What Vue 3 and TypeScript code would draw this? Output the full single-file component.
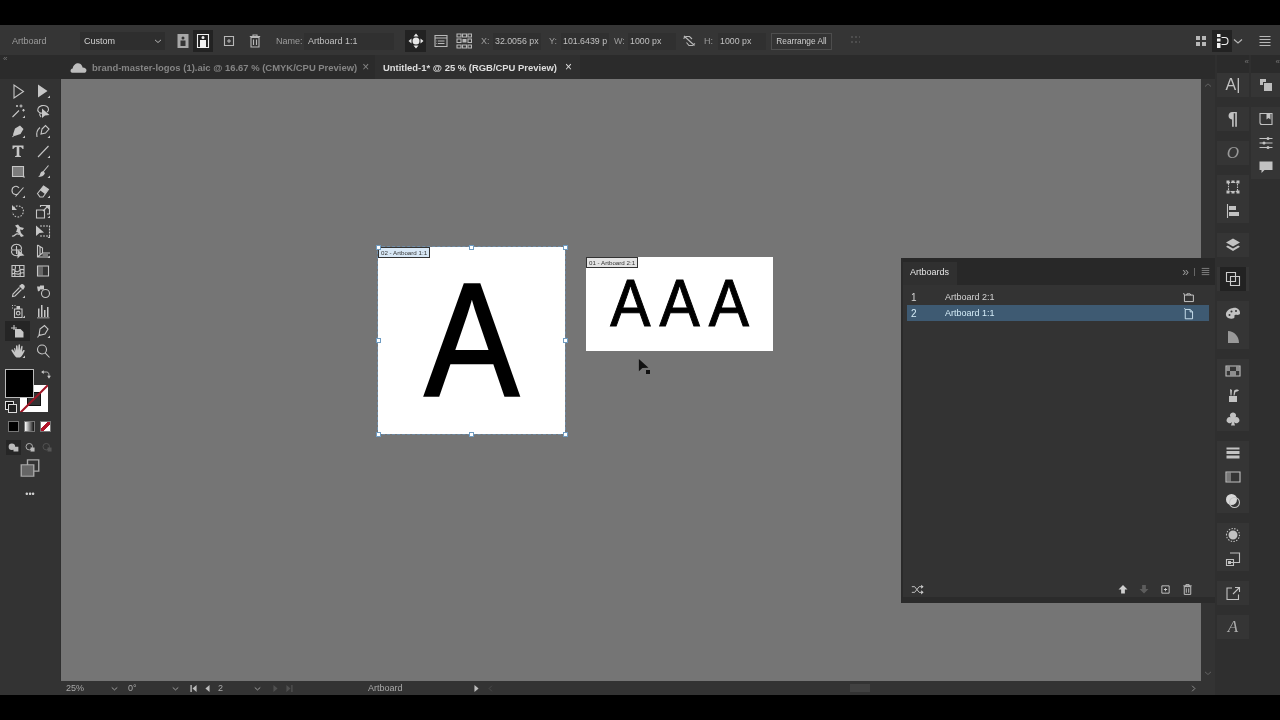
<script setup lang="ts">
import { h } from 'vue'

type Def = { s?: string; f?: string; d?: string; c?: string }

const corner = 'M15 15h-2.5l2.5-2.5z'
const circ = (x: number, y: number, r: number) => `M${x - r} ${y}A${r} ${r} 0 1 1 ${x + r} ${y}A${r} ${r} 0 1 1 ${x - r} ${y}Z`

const icons: Record<string, Def> = {
  select: { s: 'M4 2V15L13.5 8.5Z' },
  direct: { f: 'M3 1.5V14.5L12.5 8Z' + corner },
  wand: { s: 'M2.5 14L9 7.5M11 1.5v3M9.5 3h3M13.5 6v2.5M12.2 7.2h2.6M7 2v2M6 3h2', f: corner },
  lasso: { s: 'M10 10C4 11 2 8 3 5.5 4 2.5 9 1.5 12 3.5 14 5 14 8 12 9M5 10c-1 2 0 3 1 4', f: 'M7 5.5V15L10 12.5 14.5 12Z' },
  pen: { s: 'M2.5 14L5 11', f: 'M5 5.5L10 2.5 13.5 6 10.5 11 4.5 13 3 11.5Z' + corner },
  curve: { s: 'M2 14C1 9 3 6 5 4.5M7 6L10.5 2.5 14 6 10.5 10 6 11 7 6Z', f: corner },
  type: { f: 'M2.5 2.5H13.5V6H12.5C12 4.5 11 4 9.3 4V12.5L11 13.2V14H5V13.2L6.7 12.5V4C5 4 4 4.5 3.5 6H2.5Z' },
  line: { s: 'M3 14L13.5 3', f: corner },
  rect: { s: 'M2.5 3.5H13.5V13.5H2.5Z', f: 'M3 4H13V13H3Z' + corner, c: '#7c7c7c' },
  brush: { s: 'M8 9L13.5 2.5', f: 'M8.5 8.5L10 10C9 13 6 14 3 14 4.5 13 5 12 5.3 10.5 6 9 7.5 8 8.5 8.5Z' + corner },
  shaper: { s: 'M9 5C7 2 2 3 2 7.5S7 12 8 11M5.5 13.5L13.5 4.5', f: corner },
  eraser: { s: 'M2.5 10.5L8.5 3 13.5 6.5 8 14H5Z', f: 'M8.5 3L13.5 6.5 10 11 5 7.2Z' + corner },
  rotate: { s: 'M3.5 5C6 2 11 2 13 6 14.5 10 11.5 14 8 14 5 14 3 12 2.5 9', d: '1.6 1.4', f: 'M2 2V7H7Z' },
  scale: { s: 'M1.5 7H9.5V15H1.5ZM5.5 4V2.5H14.5V11H12M8 8L13 3', f: 'M10 2.5H14.5V7Z' + corner },
  warp: { s: 'M2 13C5 14 5 10 8 11S9 7 7 6', f: 'M5 2.5L8 1.5 10 4 14 5 12.5 7 10 6.5 11 10 14 13 11 14 8 9.5 6 9 7.5 5.5Z' },
  free: { s: 'M5 3H14.5V13H5', d: '2 1', f: 'M1 2.5V13L4.5 10 9 9.5Z' + corner },
  builder: { s: 'M2 7A5 4 0 1 1 11 7 5 4 0 1 1 2 7ZM2 7H11M6.5 3V11', f: 'M7.5 6.5V15.5L10 13 14.5 12.5Z' },
  persp: { s: 'M2.5 2V14H15M2.5 2L7.5 5V10L2.5 14M7.5 10H15M7.5 12H13M5 3.5V12', f: corner },
  mesh: { s: 'M2 2.5H14V13.5H2ZM2 7C5 5 5 10 8 8.5S11 5 14 7M2 11C5 9 6 12 9 11S12 9 14 10M5 2.5C7 5 3 8 5 13.5M10 2.5C8 5 12 8 10 13.5' },
  gradient: { s: 'M2.5 3H13.5V13H2.5Z', f: 'M3 3.5H5.5V12.5H3ZM5.5 3.5H8V12.5H5.5Z', c: '#666' },
  dropper: { s: 'M9.5 4.5L3 11 2.5 13.5 5 13 11.5 6.5', f: 'M9 3L11 1.5C12 .8 13 1 14 2S15 4 14.3 5L13 7Z' + corner },
  blend: { s: circ(10.5, 10.5, 4), f: 'M2 3.5H5V7.5L3 8.5ZM5 2.5H9V6.5H5Z' },
  spray: { s: 'M4.5 6H12V14.5H4.5Z' + circ(8.2, 10.2, 1.8) + 'M2 2.5h1M2 5h1M4.5 2.5h1', f: 'M6.5 3H10V6H6.5Z' + corner },
  chart: { f: 'M2 14.5H14.5V15.2H2ZM3 5.5H4.5V14H3ZM6 2H7.5V14H6ZM9 7H10.5V14H9ZM12 4H13.5V14H12Z' },
  artboard: { s: 'M1 5H7M4 2V7', f: 'M5 6H10.5L13.5 9V14.5H5Z' },
  slice: { s: 'M2.5 14.5L5 11M5 6L9.5 2.5 13 6 10 11 4 12.5Z', f: corner },
  hand: { f: 'M4 5.5C4 4.8 5 4.8 5.3 5.5L6 8 6 3C6 2 7.3 2 7.5 3L8 7.5 8.5 2C8.7 1 10 1.2 10 2.2V7.5L11.3 3.3C11.6 2.4 12.7 2.7 12.6 3.7L12 9 13.2 7.3C14 6.5 15 7.2 14.5 8.2 13 11 12 13.5 10 14.5H6.5C5 13.5 3 10 1.5 7.7 1 6.8 2 6 2.8 6.6L4.8 9.5Z' + corner },
  zoom: { s: circ(7, 6.5, 4.5) + 'M10.2 9.8L14.5 14.5' },
  portraitA: { f: 'M2.5 1H13.5V15H2.5ZM6.500 5A1.500 1.500 0 1 0 9.500 5 1.500 1.500 0 1 0 6.500 5ZM5.500 7.500V13H10.500V7.500Z', c: '#a8a8a8' },
  portraitB: { s: 'M2.500 1.500H13.500V14.500H2.500Z', f: 'M6.500 4.500A1.500 1.500 0 1 1 9.500 4.500 1.500 1.500 0 1 1 6.500 4.500ZM5 7H11V14H5Z' },
  plusbox: { s: 'M3.5 3.5H12.5V12.5H3.5Z', f: 'M7.5 6H8.5V7.5H10V8.5H8.5V10H7.5V8.5H6V7.5H7.5Z' },
  trash: { s: 'M4 4.5H12V14H4ZM2.8 3.5H13.2M6 3.5V2H10V3.5M6.5 6.5V12M9.5 6.5V12' },
  movearts: { f: 'M8 .5L10.5 3.5H5.5ZM8 15.5L5.5 12.5H10.5ZM.5 8L3.5 5.5V10.5ZM15.5 8L12.5 5.5V10.5Z' + circ(8, 8, 3.5), c: '#e8e8e8' },
  options: { s: 'M2 2.5H14V13.5H2ZM2 5H14M5 8H11.5M5 10.5H11.5', f: 'M3.5 7.5H4.2V8.5H3.5ZM3.5 10H4.2V11H3.5Z' },
  grid9: { s: 'M1 1H5V4H1ZM6.5 1H10.5V4H6.5ZM12 1H15.5V4H12ZM1 6H5V9.5H1ZM12 6H15.5V9.5H12ZM1 12H5V15H1ZM6.5 12H10.5V15H6.5ZM12 12H15.5V15H12Z', f: 'M6.5 6H10.5V9.5H6.5Z' },
  link: { s: 'M2.5 5.5L5 3.5H8.5L11 6M5.5 9.5L8 12.5H11.5L14 10.5M3 3L13.5 12.5' },
  align: { f: 'M2 3H4V5H2ZM6 3H8V5H6ZM2 8H4V10H2ZM6 8H8V10H6ZM10 3H11V5H10ZM10 8H11V10H10Z' },
  tiles: { f: 'M3 3H7V7H3ZM9 3H13V7H9ZM3 9H7V13H3ZM9 9H13V13H9Z' },
  magnet: { f: 'M3 1H6.5V4H3ZM3 5.5H6.5V8.5H3ZM3 10H6.5V15H3Z', s: 'M7.5 4.5H11C15 4.5 15 11.5 11 11.5H7.5' },
  list: { s: 'M2.5 3.5H13.5M2.5 6.5H13.5M2.5 9.5H13.5M2.5 12.5H13.5' },
  chev: { s: 'M4 6.5L8 10 12 6.5' },
  chevUp: { s: 'M4 10L8 6.5 12 10' },
  chevL: { s: 'M10 4L6 8 10 12' },
  chevR: { s: 'M6 4L10 8 6 12' },
  first: { f: 'M3.5 3H5.5V13H3.5ZM12.5 3V13L6.5 8Z' },
  prev: { f: 'M11 3V13L5 8Z' },
  next: { f: 'M5 3V13L11 8Z' },
  last: { f: 'M10.5 3H12.5V13H10.5ZM3.5 3V13L9.5 8Z' },
  cloud: { f: 'M2 13C0 13 0 9 2.5 9 3 5 7 3 9.5 4.5 11 5.5 11.5 6.5 11.8 8 14.5 8 15.5 9.500 15.500 10.500 15.500 12 14.500 13 13 13Z' },
  layers: { f: 'M8 1.5L15 5.5 8 9.5 1 5.5ZM2.8 8.5L8 11.5 13.2 8.500 15 9.7 8 14 1 9.7Z' },
  arrange: { s: 'M1.5 1.5H10.5V10.5H1.5ZM5.5 5.5H14.5V14.5H5.5Z' },
  stack: { f: 'M2 2H8V5H5V8H2ZM6 6H14V14H6Z', c: '#bdbdbd' },
  library: { s: 'M2 2.500H14V13.500H4C3 13.500 2 12.500 2 11.500Z', f: 'M8.500 2.500H12.500V8.500L10.500 7 8.500 8.500Z' },
  sliders: { s: 'M1.500 3.500H14.500M1.500 8H14.500M1.500 12.500H14.500', f: circ(10, 3.5, 1.5) + circ(6, 8, 1.5) + circ(10, 12.5, 1.5) },
  bubble: { f: 'M1.500 2.500H14.500V11H6.500L3.500 14V11H1.500Z' },
  palette: { f: 'M8 3C12 2 15.5 5 15 8.5 14.7 10 13 10 11 9.8 9 9.7 9.5 11 9.5 12 9.5 13.5 7.5 14 5 13.5 1.5 13 0 10 1.5 7 3 4.5 5 3.5 8 3ZM3.5 10A1 1 0 1 0 5.5 10 1 1 0 1 0 3.5 10ZM5.500 6.500A1 1 0 1 0 7.500 6.500 1 1 0 1 0 5.500 6.500ZM10 6A1 1 0 1 0 12 6 1 1 0 1 0 10 6Z' },
  shade: { f: 'M3 2C9 2 14 7 14 14H3Z', c: '#999' },
  transform: { s: 'M3.5 3.5H12.5V12.5H3.5Z', d: '1.6 1', f: 'M1.5 1.5H4.5V4.5H1.5ZM11.5 1.5H14.5V4.5H11.5ZM1.5 11.5H4.5V14.5H1.5ZM11.5 11.5H14.5V14.5H11.5ZM6.5 1.5H9.5V4H6.5ZM6.5 12H9.5V14.5H6.5Z' },
  alignL: { s: 'M2.5 1V15', f: 'M4 3H11V7H4ZM4 9H14V13H4Z' },
  swatch: { s: 'M1 3H15V13H1Z', f: 'M1.5 3.5H5V8H1.5ZM5 8H11V12.5H5ZM11 3.5H14.5V8H11Z', c: '#8e8e8e' },
  brushes: { f: 'M4 9H12V15H4ZM5 2L7 3 6.5 8.5H5.5ZM9 4C10 2 13 2 14 3.5 13 4.5 11.5 4.5 10.5 5L9.5 8.5H8.5Z' },
  club: { f: 'M8 1.5A3 3 0 0 1 10.5 6.3 3 3 0 1 1 9 11L10 14.5H6L7 11A3 3 0 1 1 5.5 6.3 3 3 0 0 1 8 1.5Z' },
  stroke: { f: 'M1.5 2.5H14.5V4.5H1.5ZM1.5 6H14.5V9H1.5ZM1.5 10.5H14.5V13.5H1.5Z' },
  gradPanel: { s: 'M1 3H15V13H1Z', f: 'M1.5 3.5H6V12.5H1.5Z', c: '#777' },
  transp: { f: circ(6.5, 6.5, 5.5), s: circ(9.5, 9.5, 5), c: '#d8d8d8' },
  appearance: { s: circ(8, 8, 6.5), d: '1.4 1.4', f: circ(8, 8, 4.5) },
  transformP: { s: 'M5 2H14.5V11.5H5.5M1.5 8.5H8.5V14.5H1.5Z', f: 'M3 10H6V13H3Z' },
  exportP: { s: 'M7 3H2V14.5H13.5V9.5M8 9L14 3M10 2.5H14.500V7' },
  swap: { s: 'M3 4H9C11.5 4 12 6 12 10', f: 'M5 1.5V6.5L1.5 4ZM9.5 9H14.5L12 13Z' },
  panels: { s: 'M1 5.5H11V14.5H1ZM6 5.5V1.5H15V10.5H11', f: 'M1.5 6H10.5V14H1.5Z', c: '#666' },
  sheetWide: { s: 'M3 5H14V13H3ZM3 5L2 2.5M6 5V3.5H10L11 5' },
  sheetTall: { s: 'M4 3H10L13 6V14.5H4ZM4 3L3 1.5M10 3V6H13' },
  shuffle: { s: 'M1 4.5H4.5L10 11.5H13M1 11.5H4.5L10 4.5H13', f: 'M12.5 2L15.5 4.5 12.5 7ZM12.5 9L15.5 11.5 12.5 14Z' },
  up: { f: 'M8 2.5L14 8.5H10.5V14H5.5V8.5H2Z' },
  down: { f: 'M8 14L14 8H10.5V2.5H5.5V8H2Z' },
  mode1: { f: circ(6, 7, 4) + 'M8 7H14V13H8Z' },
  mode2: { s: circ(6.5, 7, 4), f: 'M8 8H13V13H8Z' },
  cursor: { f: 'M1 1V15L5 11.5 12 11Z', c: '#111' }
}

function Ico(props: { n: string; size?: number }) {
  const def = icons[props.n] ?? {}
  const kids = []
  if (def.f) kids.push(h('path', { d: def.f, fill: def.c ?? 'currentColor' }))
  if (def.s) {
    kids.push(h('path', { d: def.s, fill: 'none', stroke: 'currentColor', 'stroke-width': 1.1, 'stroke-dasharray': def.d }))
  }
  return h('svg', { class: 'ico', width: props.size ?? 16, height: props.size ?? 16, viewBox: '0 0 16 16' }, kids)
}
Ico.props = ['n', 'size']

const tools = [
  'select', 'direct', 'wand', 'lasso', 'pen', 'curve', 'type', 'line', 'rect', 'brush', 'shaper', 'eraser',
  'rotate', 'scale', 'warp', 'free', 'builder', 'persp', 'mesh', 'gradient', 'dropper', 'blend', 'spray', 'chart',
  'artboard', 'slice', 'hand', 'zoom'
]

type Ctl = { k: string; w: number; t?: string; n?: string; on?: boolean; dim?: boolean; num?: boolean }
const controls: Ctl[] = [
  { k: 'lab', w: 68, t: 'Artboard' },
  { k: 'sel', w: 85, t: 'Custom' },
  { k: 'gap', w: 7 },
  { k: 'ic', w: 21, n: 'portraitA' },
  { k: 'ic', w: 20, n: 'portraitB', on: true },
  { k: 'gap', w: 6 },
  { k: 'ic', w: 20, n: 'plusbox' },
  { k: 'gap', w: 6 },
  { k: 'ic', w: 20, n: 'trash' },
  { k: 'gap', w: 11 },
  { k: 'lab', w: 28, t: 'Name:' },
  { k: 'fld', w: 90, t: 'Artboard 1:1' },
  { k: 'gap', w: 11 },
  { k: 'ic', w: 21, n: 'movearts', on: true },
  { k: 'gap', w: 5 },
  { k: 'ic', w: 20, n: 'options' },
  { k: 'gap', w: 3 },
  { k: 'ic', w: 20, n: 'grid9' },
  { k: 'gap', w: 7 },
  { k: 'lab', w: 12, t: 'X:' },
  { k: 'fld', w: 48, t: '32.0056 px', num: true },
  { k: 'gap', w: 8 },
  { k: 'lab', w: 12, t: 'Y:' },
  { k: 'fld', w: 48, t: '101.6439 p', num: true },
  { k: 'gap', w: 5 },
  { k: 'lab', w: 14, t: 'W:' },
  { k: 'fld', w: 48, t: '1000 px', num: true },
  { k: 'gap', w: 3 },
  { k: 'ic', w: 20, n: 'link' },
  { k: 'gap', w: 5 },
  { k: 'lab', w: 14, t: 'H:' },
  { k: 'fld', w: 48, t: '1000 px', num: true },
  { k: 'gap', w: 5 },
  { k: 'btn', w: 61, t: 'Rearrange All' },
  { k: 'gap', w: 15 },
  { k: 'ic', w: 20, n: 'align', dim: true },
  { k: 'grow', w: 0 },
  { k: 'ic', w: 20, n: 'tiles' },
  { k: 'gap', w: 1 },
  { k: 'ic', w: 20, n: 'magnet', on: true },
  { k: 'ic', w: 12, n: 'chev' },
  { k: 'gap', w: 11 },
  { k: 'ic', w: 20, n: 'list' }
]

const status: Ctl[] = [
  { k: 'txt', w: 45, t: '25%' },
  { k: 'ic', w: 14, n: 'chev' },
  { k: 'gap', w: 3 },
  { k: 'txt', w: 44, t: '0°' },
  { k: 'ic', w: 14, n: 'chev' },
  { k: 'gap', w: 4 },
  { k: 'ic', w: 14, n: 'first' },
  { k: 'ic', w: 14, n: 'prev' },
  { k: 'txt', w: 36, t: '2' },
  { k: 'ic', w: 14, n: 'chev' },
  { k: 'gap', w: 4 },
  { k: 'ic', w: 14, n: 'next', dim: true },
  { k: 'ic', w: 14, n: 'last', dim: true },
  { k: 'gap', w: 68 },
  { k: 'txt', w: 105, t: 'Artboard' },
  { k: 'ic', w: 14, n: 'next' },
  { k: 'ic', w: 14, n: 'chevL', dim: true }
]

type DockItem = { n?: string; g?: string; cls?: string }
const dockMain: DockItem[][] = [
  [{ g: 'A|', cls: 'g-char' }],
  [{ g: '¶', cls: 'g-para' }],
  [{ g: 'O', cls: 'g-open' }],
  [{ n: 'transform' }, { n: 'alignL' }],
  [{ n: 'layers' }],
  [{ n: 'arrange', cls: 'on' }],
  [{ n: 'palette' }, { n: 'shade' }],
  [{ n: 'swatch' }, { n: 'brushes' }, { n: 'club' }],
  [{ n: 'stroke' }, { n: 'gradPanel' }, { n: 'transp' }],
  [{ n: 'appearance' }, { n: 'transformP' }],
  [{ n: 'exportP' }],
  [{ g: 'A', cls: 'g-script' }]
]
const dockSide: DockItem[][] = [
  [{ n: 'stack' }],
  [{ n: 'library' }, { n: 'sliders' }, { n: 'bubble' }]
]

const handles = ['tl', 'tm', 'tr', 'ml', 'mr', 'bl', 'bm', 'br']
const rows = [
  { no: 1, name: 'Artboard 2:1', icon: 'sheetWide', sel: false },
  { no: 2, name: 'Artboard 1:1', icon: 'sheetTall', sel: true }
]
</script>

<template>
  <div class="app">
    <div class="bar-black top"></div>
    <header class="control">
      <template v-for="(c, i) in controls" :key="i">
        <div v-if="c.k === 'grow'" class="grow"></div>
        <div v-else :class="['ctl', c.k, { on: c.on, dim: c.dim, num: c.num }]" :style="{ width: c.w + 'px' }">
          <Ico v-if="c.n" :n="c.n" />
          <span v-if="c.t">{{ c.t }}</span>
          <Ico v-if="c.k === 'sel'" n="chev" :size="12" />
        </div>
      </template>
    </header>
    <div class="body">
      <div class="work">
        <div class="tabs">
          <div class="tab-lead"><span class="collapse">«</span></div>
          <div class="tab idle">
            <span class="cloud"><Ico n="cloud" :size="17" /></span>
            <span class="tab-title">brand-master-logos (1).aic @ 16.67 % (CMYK/CPU Preview)</span>
            <span class="close">×</span>
          </div>
          <div class="tab active">
            <span class="tab-title">Untitled-1* @ 25 % (RGB/CPU Preview)</span>
            <span class="close">×</span>
          </div>
        </div>
        <div class="main">
          <aside class="tools">
            <div class="tool-grid">
              <div v-for="t in tools" :key="t" :class="['tool', { on: t === 'artboard' }]"><Ico :n="t" /></div>
            </div>
            <div class="colors">
              <div class="stroke-box"><div class="stroke-hole"></div><div class="slash"></div></div>
              <div class="fill-box"></div>
              <span class="swap"><Ico n="swap" :size="12" /></span>
              <span class="defaults"><i></i><i></i></span>
            </div>
            <div class="swatches">
              <span class="sw black"></span>
              <span class="sw grad"></span>
              <span class="sw none"></span>
            </div>
            <div class="modes">
              <span class="mode on"><Ico n="mode1" :size="13" /></span>
              <span class="mode"><Ico n="mode2" :size="13" /></span>
              <span class="mode faint"><Ico n="mode2" :size="13" /></span>
            </div>
            <div class="screen"><Ico n="panels" :size="20" /></div>
            <div class="dots">•••</div>
          </aside>
          <section class="canvas">
            <div class="board board-a">
              <span class="glyph glyph-a">A</span>
              <span class="board-tag tag-sel">02 - Artboard 1:1</span>
              <span v-for="p in handles" :key="p" :class="['handle', p]"></span>
            </div>
            <div class="board board-b">
              <span class="glyph glyph-b">AAA</span>
              <span class="board-tag">01 - Artboard 2:1</span>
            </div>
            <div class="pointer">
              <Ico n="cursor" :size="14" />
              <i></i>
            </div>
          </section>
          <div class="vscroll">
            <Ico n="chevUp" :size="12" />
            <Ico n="chev" :size="12" />
          </div>
          <section class="panel">
            <div class="panel-head">
              <div class="panel-tab">Artboards</div>
              <div class="panel-tools">
                <span class="more">»</span><span class="sep"></span><Ico n="list" :size="11" />
              </div>
            </div>
            <div class="panel-list">
              <div v-for="r in rows" :key="r.no" :class="['row', { sel: r.sel }]">
                <span class="no">{{ r.no }}</span>
                <span class="name">{{ r.name }}</span>
                <Ico :n="r.icon" :size="13" />
              </div>
            </div>
            <div class="panel-foot">
              <Ico n="shuffle" :size="13" />
              <div class="foot-right">
                <Ico n="up" :size="12" />
                <span class="dim"><Ico n="down" :size="12" /></span>
                <Ico n="plusbox" :size="13" />
                <Ico n="trash" :size="13" />
              </div>
            </div>
          </section>
        </div>
        <footer class="status">
          <template v-for="(c, i) in status" :key="i">
            <div :class="['st', c.k, { dim: c.dim }]" :style="{ width: c.w + 'px' }">
              <Ico v-if="c.n" :n="c.n" :size="11" />
              <span v-if="c.t">{{ c.t }}</span>
            </div>
          </template>
          <div class="hscroll"><span class="thumb"></span></div>
          <Ico n="chevR" :size="11" />
        </footer>
      </div>
      <aside class="dock">
        <div class="dock-col main-col">
          <div class="dock-head">«</div>
          <div v-for="(g, i) in dockMain" :key="i" class="dock-group">
            <div v-for="(d, j) in g" :key="j" :class="['dock-item', d.cls]">
              <Ico v-if="d.n" :n="d.n" />
              <span v-else>{{ d.g }}</span>
            </div>
          </div>
        </div>
        <div class="dock-col side-col">
          <div class="dock-head">«</div>
          <div v-for="(g, i) in dockSide" :key="i" class="dock-group">
            <div v-for="(d, j) in g" :key="j" class="dock-item"><Ico v-if="d.n" :n="d.n" /></div>
          </div>
        </div>
      </aside>
    </div>
    <div class="bar-black bottom"></div>
  </div>
</template>

<style>
html, body { margin: 0; background: #000; }
</style>

<style scoped>
.app {
  width: 1280px; height: 720px; display: flex; flex-direction: column; overflow: hidden;
  background: #000; color: #c4c4c4; font: 9px "Liberation Sans", Arial, sans-serif;
  filter: blur(0.35px);
}
.bar-black.top { height: 25px; background: #000; }
.bar-black.bottom { height: 25px; background: #000; }
.ico { display: block; flex: none; }

.control { height: 30px; display: flex; align-items: center; padding: 2px 5px 0 12px; box-sizing: border-box; background: #353535; flex: none; }
.ctl { display: flex; align-items: center; justify-content: center; height: 20px; flex: none; white-space: nowrap; }
.ctl.lab { justify-content: flex-start; color: #9c9c9c; }
.ctl.sel { justify-content: space-between; padding: 0 1px 0 4px; box-sizing: border-box; background: #2e2e2e; color: #d0d0d0; height: 18px; }
.ctl.fld { justify-content: flex-start; padding-left: 4px; box-sizing: border-box; background: #303030; color: #c0c0c0; height: 17px; overflow: hidden; }
.ctl.fld.num { padding-left: 2px; font-size: 8.8px; }
.ctl.ic { color: #b8b8b8; }
.ctl.ic.on { background: #222; color: #f0f0f0; height: 22px; }
.ctl.ic.dim { color: #4e4e4e; }
.ctl.btn { border: 1px solid #4d4d4d; box-sizing: border-box; background: #333; color: #cfcfcf; height: 17px; font-size: 8.3px; }
.grow { flex: 1; }

.body { flex: 1; display: flex; min-height: 0; background: #2f2f2f; }
.work { width: 1215px; display: flex; flex-direction: column; flex: none; }
.tabs { height: 24px; display: flex; flex: none; background: #2b2b2b; }
.tab-lead { width: 70px; flex: none; position: relative; }
.collapse { position: absolute; left: 3px; top: -1px; font-size: 8px; color: #777; }
.tab { display: flex; align-items: center; height: 24px; box-sizing: border-box; font-size: 9.45px; font-weight: 700; }
.tab.idle { width: 305px; color: #858585; }
.tab.active { width: 205px; padding-left: 8px; background: #2f2f2f; color: #dedede; }
.cloud { width: 22px; color: #bdbdbd; flex: none; }
.tab-title { white-space: nowrap; }
.close { font-size: 12px; font-weight: 400; margin-left: 5px; }
.tab.active .close { margin-left: 8px; }

.main { flex: 1; display: flex; position: relative; min-height: 0; }
.tools { width: 60px; margin-right: 1px; background: #333; flex: none; display: flex; flex-direction: column; align-items: center; padding-top: 2px; box-sizing: border-box; }
.tool-grid { display: grid; grid-template-columns: 25px 25px; grid-auto-rows: 20px; }
.tool { display: flex; align-items: center; justify-content: center; color: #c6c6c6; }
.tool.on { background: #252525; }

.colors { width: 50px; height: 46px; margin-top: 8px; position: relative; flex: none; }
.fill-box { position: absolute; left: 0; top: 0; width: 27px; height: 27px; background: #000; border: 1px solid #bbb; }
.stroke-box { position: absolute; left: 15px; top: 16px; width: 28px; height: 27px; background: #fff; overflow: hidden; }
.stroke-hole { position: absolute; left: 7px; top: 7px; width: 14px; height: 14px; background: #333; border: 1px solid #111; box-sizing: border-box; }
.slash { position: absolute; left: -6px; top: 13px; width: 40px; height: 2px; background: #a01525; transform: rotate(-45deg); }
.swap { position: absolute; left: 35px; top: 0; color: #c8c8c8; }
.defaults { position: absolute; left: 0; top: 32px; width: 11px; height: 11px; }
.defaults i { position: absolute; width: 7px; height: 7px; border: 1px solid #ddd; background: #111; }
.defaults i:first-child { left: 0; top: 0; }
.defaults i:last-child { left: 3px; top: 3px; background: #222; }

.swatches { display: flex; gap: 5px; margin: 6px 2px 0 0; }
.sw { width: 11px; height: 11px; box-sizing: border-box; border: 1px solid #777; }
.sw.black { background: #000; }
.sw.grad { background: linear-gradient(90deg, #fff, #111); }
.sw.none { background: linear-gradient(135deg, #fff 0 38%, #b01428 38% 62%, #fff 62%); }
.modes { display: flex; gap: 2px; margin-top: 8px; color: #bbb; }
.mode { width: 15px; height: 15px; display: flex; align-items: center; justify-content: center; }
.mode.on { background: #262626; }
.mode.faint { color: #555; }
.screen { margin-top: 3px; color: #aaa; }
.dots { margin-top: 11px; font-size: 9px; letter-spacing: 0; color: #cfcfcf; }

.canvas { width: 1140px; background: #757575; position: relative; flex: none; }
.board { position: absolute; background: #fff; display: flex; align-items: center; justify-content: center; }
.board-a { left: 317px; top: 168px; width: 187px; height: 187px; outline: 1px dashed #6d8ba6; }
.board-b { left: 525px; top: 178px; width: 187px; height: 94px; }
.glyph { color: #000; font-family: "Liberation Sans", Arial, sans-serif; display: block; line-height: 0.8; white-space: nowrap; -webkit-text-stroke: 0 #000; }
.glyph-a { font-size: 161px; transform: scaleX(0.88); -webkit-text-stroke: 2.5px #000; }
.glyph-b { font-size: 67px; letter-spacing: 10px; margin: -2px 0 0 10px; transform: scaleX(0.9); -webkit-text-stroke: 1px #000; }
.board-tag { position: absolute; left: 0; top: 0; width: 52px; height: 11px; box-sizing: border-box; font-size: 6.2px; line-height: 9px; padding-left: 2px; color: #333; background: #e4e4e4; border: 1px solid #333; white-space: nowrap; overflow: hidden; }
.tag-sel { background: #d8e8f6; }
.handle { position: absolute; width: 5px; height: 5px; background: #fff; border: 1px solid #6f9cc2; box-sizing: border-box; margin: -2.5px 0 0 -2.5px; }
.tl { left: 0; top: 0; } .tm { left: 50%; top: 0; } .tr { left: 100%; top: 0; }
.ml { left: 0; top: 50%; } .mr { left: 100%; top: 50%; }
.bl { left: 0; top: 100%; } .bm { left: 50%; top: 100%; } .br { left: 100%; top: 100%; }
.pointer { position: absolute; left: 577px; top: 279px; width: 14px; height: 18px; }
.pointer i { position: absolute; left: 8px; top: 12px; width: 4px; height: 4px; background: #111; }

.vscroll { width: 14px; flex: none; background: #333; color: #6a6a6a; display: flex; flex-direction: column; justify-content: space-between; align-items: center; padding: 0 0 2px; box-sizing: border-box; }

.panel { position: absolute; left: 901px; top: 179px; width: 314px; height: 345px; display: flex; flex-direction: column; background: #333; border-left: 2px solid #2a2a2a; border-bottom: 6px solid #2b2b2b; box-sizing: border-box; }
.panel-head { height: 27px; flex: none; display: flex; justify-content: space-between; background: #282828; padding-top: 4px; box-sizing: border-box; }
.panel-tab { width: 54px; background: #303030; color: #e6e6e6; padding: 5px 0 0 7px; box-sizing: border-box; }
.panel-tools { display: flex; align-items: center; gap: 5px; color: #999; padding: 0 4px 4px 0; }
.more { font-size: 12px; line-height: 12px; }
.sep { width: 1px; height: 8px; background: #666; }
.panel-list { padding: 4px 6px 0 4px; flex: 1; }
.row { height: 16px; display: flex; align-items: center; color: #d4d4d4; padding: 0 14px 0 4px; }
.row .no { width: 34px; font-size: 10px; }
.row .name { flex: 1; }
.row.sel { background: #3e5a72; color: #d5ecf7; }
.panel-foot { height: 16px; flex: none; display: flex; align-items: center; justify-content: space-between; padding: 0 21px 0 8px; box-sizing: border-box; color: #cfcfcf; }
.foot-right { display: flex; gap: 9px; align-items: center; }
.dim { color: #5c5c5c; }

.status { height: 14px; flex: none; display: flex; align-items: center; padding: 0 16px 0 62px; background: #333; color: #a9a9a9; box-sizing: border-box; overflow: hidden; }
.st { display: flex; align-items: center; flex: none; height: 14px; }
.st.txt { padding-left: 4px; box-sizing: border-box; }
.st.ic { justify-content: center; color: #bdbdbd; }
.st.ic.dim { color: #505050; }
.hscroll { flex: 1; height: 14px; position: relative; }
.thumb { position: absolute; left: 353px; top: 3px; width: 20px; height: 8px; background: #414141; }

.dock { flex: 1; display: flex; background: #2f2f2f; min-width: 0; }
.dock-col { flex: none; display: flex; flex-direction: column; gap: 10px; }
.main-col { width: 32px; margin-left: 2px; }
.side-col { width: 29px; margin-left: 2px; }
.dock-head { height: 8px; padding: 3px 0 7px; text-align: right; font-size: 8px; line-height: 8px; color: #777; background: #2b2b2b; margin-bottom: -10px; }
.dock-group { background: #353535; }
.dock-item { height: 24px; display: flex; align-items: center; justify-content: center; color: #c2c2c2; }
.dock-item.on { background: #222; margin: 0 3px; color: #ccc; }
.g-char span { font-size: 16px; font-family: "Liberation Sans", Arial, sans-serif; }
.g-para span { font-size: 17px; font-family: "DejaVu Sans", sans-serif; font-weight: 700; }
.g-open span { font-size: 17px; font-style: italic; font-family: "Liberation Serif", serif; color: #999; }
.g-script span { font-size: 17px; font-style: italic; font-family: "Liberation Serif", serif; color: #aaa; }
</style>
